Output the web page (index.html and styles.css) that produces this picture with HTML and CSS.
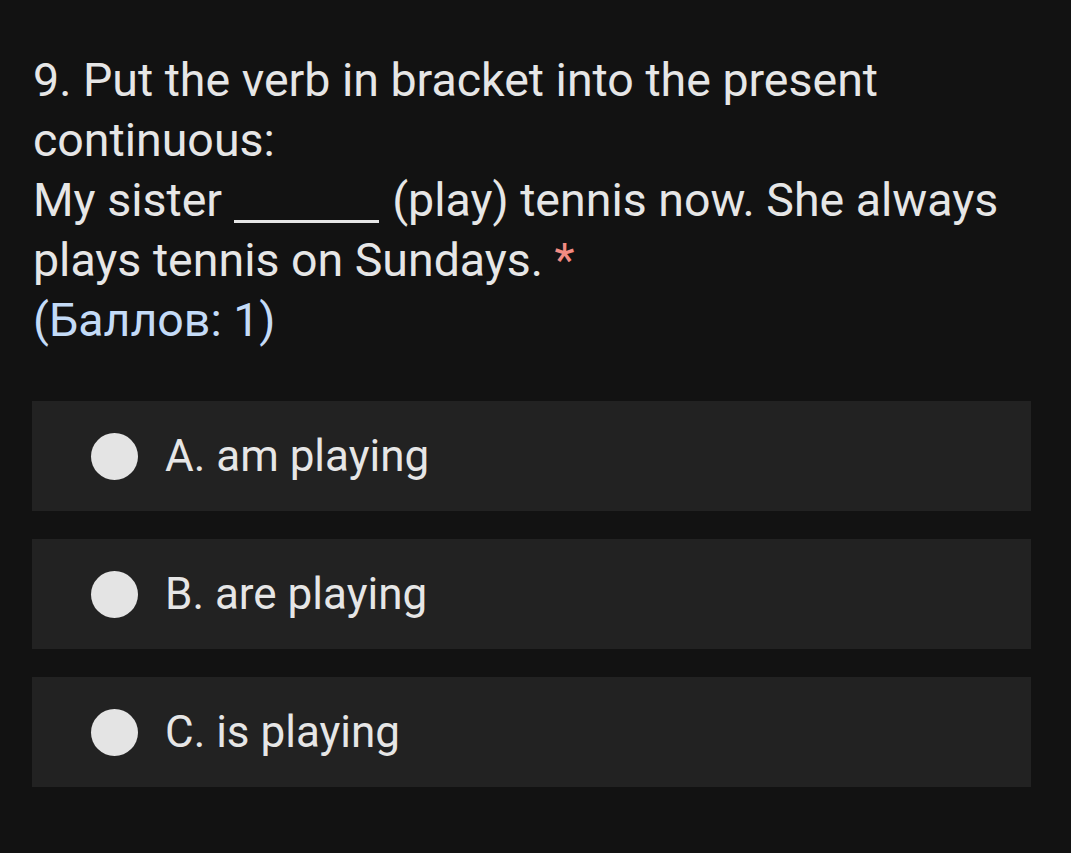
FILE: index.html
```html
<!DOCTYPE html>
<html>
<head>
<meta charset="utf-8">
<link rel="stylesheet" href="styles.css">
</head>
<body>
<div class="page">
  <div class="question">
    <div class="title">9. Put the verb in bracket into the present continuous:</div>
    <div class="title">My sister <span class="blank"></span> (play) tennis now. She always plays tennis on Sundays. <span class="req">*</span></div>
    <div class="points">(Баллов: 1)</div>
  </div>
  <div class="options">
    <div class="option"><span class="radio"></span><span class="label">A. am playing</span></div>
    <div class="option"><span class="radio"></span><span class="label">B. are playing</span></div>
    <div class="option"><span class="radio"></span><span class="label">C. is playing</span></div>
  </div>
</div>
</body>
</html>
```
FILE: styles.css
```css
html, body {
  margin: 0;
  padding: 0;
  background: #121212;
}
body {
  font-family: Roboto, "Noto Sans", sans-serif;
  color: #e6e6e6;
  width: 1071px;
  height: 853px;
  overflow: hidden;
}
.page {
  padding: 50px 40px 0 33px;
}
.question {
  font-size: 46.5px;
  line-height: 60px;
}
.blank {
  display: inline-block;
  width: 145px;
  height: 3px;
  background: #e6e6e6;
  vertical-align: -7px;
  margin: 0 2px 0 0;
}
.req {
  color: #f28b82;
}
.points {
  color: #c4dbf7;
}
.options {
  margin-top: 51px;
  margin-left: -1px;
  display: flex;
  flex-direction: column;
  gap: 28px;
}
.option {
  background: #222222;
  height: 110px;
  display: flex;
  align-items: center;
  padding-left: 59px;
}
.radio {
  width: 47px;
  height: 47px;
  border-radius: 50%;
  background: #e4e4e4;
  flex: none;
}
.label {
  font-size: 44px;
  margin-left: 27px;
}
```
